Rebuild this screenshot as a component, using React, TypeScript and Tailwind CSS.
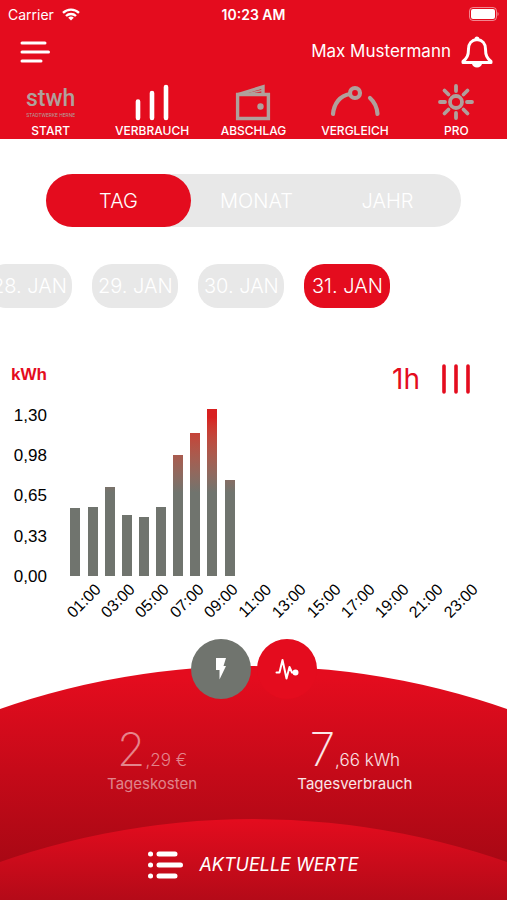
import React, { useState } from 'react';

interface Tab {
  label: string;
  icon: React.ReactNode;
}

const StwhLogo = () => (
  <span className="flex flex-col items-center font-['Roboto',sans-serif] text-[#b0a09c]">
    <span className="text-[23px] leading-6 font-medium">stwh</span>
    <span className="text-[5px] leading-2 whitespace-nowrap">STADTWERKE HERNE</span>
  </span>
);

const BarsIcon = () => (
  <svg width="36" height="38" viewBox="0 0 36 38" fill="none" stroke="white" strokeWidth="4.6" strokeLinecap="round">
    <path d="M4 17.500v16.500M18 9v25M32 3v31" />
  </svg>
);

const WalletIcon = () => (
  <svg width="36" height="38" viewBox="0 0 36 38" fill="none" stroke="#b0a09c" strokeWidth="3.400">
    <path d="M2.600 10.500h30.800v24H2.600z" />
    <path d="M3 10.500 28 2.800v7.500" />
    <path d="M14 9.500 27 6.500" strokeWidth="1.500" />
    <circle cx="25.500" cy="22.500" r="3.200" fill="#b0a09c" stroke="none" />
  </svg>
);

const GaugeIcon = () => (
  <svg width="50" height="38" viewBox="0 0 50 38" fill="none" stroke="#b0a09c" strokeWidth="4.200" strokeLinecap="round">
    <path d="M3 30C4 19.500 10 11.500 20 10" />
    <circle cx="25" cy="9" r="5" />
    <path d="M40 14c4.500 4 7 9 7.500 16" />
  </svg>
);

const SunIcon = () => (
  <svg width="38" height="38" viewBox="0 0 38 38" fill="none" stroke="#b0a09c" strokeWidth="3.800" strokeLinecap="round">
    <circle cx="19" cy="18" r="6" />
    <path d="M19 2v5M19 29v5M3 18h5M30 18h5M7.500 6.500l4 4M26.500 25.500l4 4M7.500 29.500l4-4M26.500 10.500l4-4" />
  </svg>
);

const tabs: Tab[] = [
  { label: 'START', icon: <StwhLogo /> },
  { label: 'VERBRAUCH', icon: <BarsIcon /> },
  { label: 'ABSCHLAG', icon: <WalletIcon /> },
  { label: 'VERGLEICH', icon: <GaugeIcon /> },
  { label: 'PRO', icon: <SunIcon /> },
];

const periods = ['TAG', 'MONAT', 'JAHR'];
const days = ['28. JAN', '29. JAN', '30. JAN', '31. JAN'];

const yLabels = ['1,30', '0,98', '0,65', '0,33', '0,00'];
const xLabels = ['01:00', '03:00', '05:00', '07:00', '09:00', '11:00', '13:00', '15:00', '17:00', '19:00', '21:00', '23:00'];

// kWh per hour, the rest of the day has no values yet
const usage = [0.55, 0.56, 0.72, 0.49, 0.48, 0.56, 0.98, 1.16, 1.35, 0.78];
const MAX_USAGE = 1.35;

const StatusBar = () => (
  <div className="grid h-7 grid-cols-3 items-center px-2 text-[14px]">
    <div className="flex items-center gap-2">
      <span>Carrier</span>
      <svg width="18" height="13" viewBox="0 0 18 13" fill="none" stroke="white" strokeWidth="2.300">
        <path d="M1 4.800a11.500 11.500 0 0 1 16 0M4 8a7.200 7.200 0 0 1 10 0" />
        <path d="M9 12.500 6.200 9.800a4 4 0 0 1 5.600 0z" fill="white" stroke="none" />
      </svg>
    </div>
    <span className="text-center font-semibold whitespace-nowrap">10:23 AM</span>
    <svg className="justify-self-end" width="30" height="14" viewBox="0 0 30 14" fill="none">
      <rect x=".5" y=".5" width="27" height="13" rx="3.500" stroke="white" strokeOpacity=".5" />
      <rect x="2" y="2" width="24" height="10" rx="2" fill="white" />
      <path d="M28.500 5v4c1.500-.5 1.500-3.500 0-4z" fill="white" fillOpacity=".5" />
    </svg>
  </div>
);

const Header = () => (
  <header className="bg-[#e40c1e] text-white">
    <StatusBar />
    <div className="flex h-12 items-center justify-between pr-3 pl-5">
      <button aria-label="Menü">
        <svg width="30" height="24" viewBox="0 0 30 24" fill="none" stroke="white" strokeWidth="3" strokeLinecap="round">
          <path d="M2 3h23M2 12h26.500M2 21h19" />
        </svg>
      </button>
      <div className="flex items-center gap-2">
        <span className="text-[17px]">Max Mustermann</span>
        <button aria-label="Benachrichtigungen">
          <svg width="36" height="34" viewBox="0 0 36 34" fill="none" stroke="white" strokeWidth="3" strokeLinejoin="round">
            <path d="M18 4.500c-5.500.5-8.500 4.500-8.500 9.500 0 6.500-1.500 9-5.500 12.500v1h28v-1c-4-3.500-5.500-6-5.500-12.500 0-5-3-9-8.500-9.500z" />
            <path d="M15.500 4a2.500 2.500 0 0 1 5 0M13 28.500a5 4 0 0 0 10 0z" fill="white" stroke="none" />
          </svg>
        </button>
      </div>
    </div>
    <nav className="grid grid-cols-5 pt-2">
      {tabs.map((tab) => (
        <a key={tab.label} href="#" className="flex flex-col items-center">
          <span className="flex h-[38px] items-center">{tab.icon}</span>
          <span className="text-[12px] leading-[17px] font-medium">{tab.label}</span>
        </a>
      ))}
    </nav>
  </header>
);

const UsageChart = () => (
  <section className="mt-[47px] flex gap-5 pr-[29px] pl-[11px]">
    <div className="grid h-[242px] grid-rows-6 items-center text-right font-['Liberation_Sans',sans-serif] text-[17px] text-black">
      <span className="font-bold text-[#e40c1e]">kWh</span>
      {yLabels.map((label) => (
        <span key={label}>{label}</span>
      ))}
    </div>
    <div className="flex-1">
      <div className="mb-1.5 flex h-12 items-center justify-end gap-5 pr-1.5 text-[#e40c1e]">
        <span className="text-[28px]">1h</span>
        <button aria-label="Intervall">
          <svg width="32" height="32" viewBox="0 0 32 32" fill="none" stroke="#e40c1e" strokeWidth="3.600" strokeLinecap="round">
            <path d="M4 3v26M16 3v26M28 3v26" />
          </svg>
        </button>
      </div>
      <div className="grid h-[167px] grid-cols-24 items-end">
        {usage.map((value, i) => (
          <div
            key={i}
            className="mx-auto flex w-2.5 flex-col justify-end overflow-hidden"
            style={{ height: `${(value / MAX_USAGE) * 100}%` }}
          >
            <div className="h-[167px] shrink-0 bg-linear-to-b from-[#d82020] from-5% to-[#70746e] to-50%" />
          </div>
        ))}
      </div>
      <div className="grid h-[50px] grid-cols-12 items-center font-['Liberation_Sans',sans-serif] text-[16px] text-black">
        {xLabels.map((label) => (
          <span key={label} className="flex -rotate-45 justify-center whitespace-nowrap">
            {label}
          </span>
        ))}
      </div>
    </div>
  </section>
);

interface StatProps {
  whole: string;
  rest: string;
  label: string;
  className: string;
}

const Stat: React.FC<StatProps> = ({ whole, rest, label, className }) => (
  <div className={`flex flex-col items-center ${className}`}>
    <p className="text-[46px] leading-[46px] font-extralight">
      {whole}
      <span className="text-[17px] leading-none font-light">{rest}</span>
    </p>
    <p className="text-[15px] leading-6">{label}</p>
  </div>
);

const Footer = () => (
  <footer className="mt-auto">
    <div className="relative z-10 -mb-[33px] flex justify-center gap-1.5">
      <button aria-label="Strom" className="flex size-[60px] items-center justify-center rounded-full bg-[#70746e]">
        <svg width="12" height="22" viewBox="0 0 12 22" fill="white">
          <path d="M1 0h10L8.500 8H11L4.500 21.500V12H1z" />
        </svg>
      </button>
      <button aria-label="Verlauf" className="flex size-[60px] items-center justify-center rounded-full bg-[#e40c1e]">
        <svg width="24" height="22" viewBox="0 0 24 22" fill="none" stroke="white" strokeWidth="2" strokeLinecap="round" strokeLinejoin="round">
          <path d="M1.500 14.500h3L7.500 2l4 18.500L14.500 9l2.500 5.500h3" />
          <circle cx="20.500" cy="14.500" r="2" fill="white" />
        </svg>
      </button>
    </div>
    <div className="bg-linear-to-b from-[#e40c1e] from-5% to-[#a80814] to-85% pt-[60px] [clip-path:circle(768px_at_50%_768px)]">
      <div className="grid grid-cols-2 px-[10%] pb-[23px]">
        <Stat whole="2" rest=",29 €" label="Tageskosten" className="text-white/50" />
        <Stat whole="7" rest=",66 kWh" label="Tagesverbrauch" className="text-white/90" />
      </div>
      <button className="flex h-[81px] w-full items-center justify-center gap-4 bg-linear-to-b from-[#e40c1e] to-[#b40a18] pt-2.5 text-white [clip-path:circle(768px_at_50%_768px)]">
        <svg width="35" height="30" viewBox="0 0 35 30" fill="none" stroke="white" strokeWidth="5" strokeLinecap="round">
          <path d="M2.500 4h.1M2.500 15h.1M2.500 26h.1M11 4h16M11 15h21.500M11 26h16" />
        </svg>
        <span className="text-[18px] italic">AKTUELLE WERTE</span>
      </button>
    </div>
  </footer>
);

const App: React.FC = () => {
  const [period, setPeriod] = useState('TAG');
  const [day, setDay] = useState('31. JAN');

  return (
    <div className="flex min-h-screen flex-col overflow-hidden bg-white font-['Inter',sans-serif]">
      <Header />
      <main>
        <div className="mx-[46px] mt-[35px] flex h-[53px] rounded-full bg-[#e8e8e8] pr-2 text-[20px] font-light text-white">
          {periods.map((p) => (
            <button
              key={p}
              onClick={() => setPeriod(p)}
              className={`rounded-full ${p === period ? 'w-[145px] bg-[#e40c1e]' : 'flex-1'}`}
            >
              {p}
            </button>
          ))}
        </div>
        <div className="mt-[37px] flex justify-end gap-5 pr-[23%]">
          {days.map((d) => (
            <button
              key={d}
              onClick={() => setDay(d)}
              className={`h-11 w-[86px] shrink-0 rounded-[20px] text-[20px] font-light whitespace-nowrap text-white ${
                d === day ? 'bg-[#e40c1e]' : 'bg-[#e8e8e8]'
              }`}
            >
              {d}
            </button>
          ))}
        </div>
        <UsageChart />
      </main>
      <Footer />
    </div>
  );
};

export default App;
